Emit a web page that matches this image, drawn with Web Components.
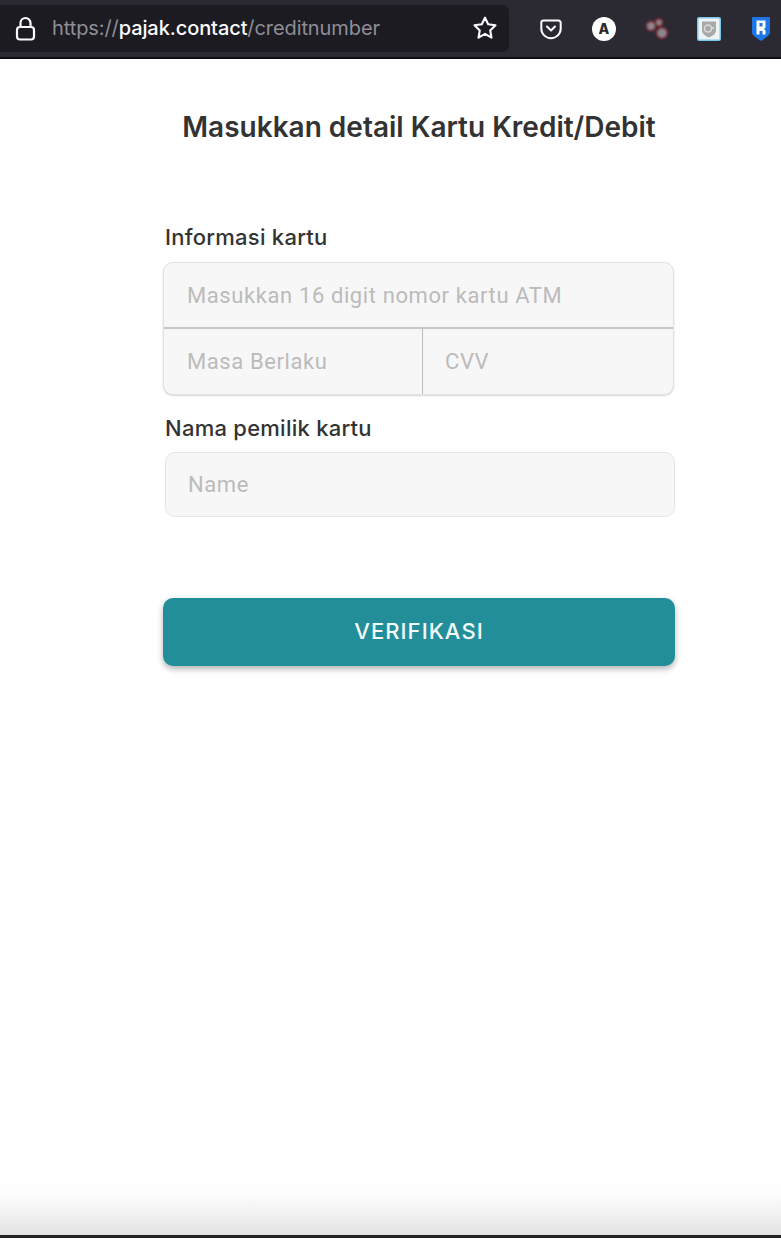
<!DOCTYPE html>
<html lang="id">
<head>
<meta charset="utf-8">
<title>Kartu Kredit/Debit</title>
<style>
html, body { margin: 0; padding: 0; background: #fff; }
body { height: 1238px; overflow: hidden; display: flex; flex-direction: column; font-family: "Inter", "Liberation Sans", sans-serif; }
</style>
</head>
<body>
<browser-bar></browser-bar>
<credit-form>
  <form-title>Masukkan detail Kartu Kredit/Debit</form-title>
  <form-label style="margin-top:76px">Informasi kartu</form-label>
  <card-box style="margin-top:9px"></card-box>
  <form-label style="margin-top:17px">Nama pemilik kartu</form-label>
  <name-box style="margin-top:8px">Name</name-box>
  <verify-button style="margin-top:81px">VERIFIKASI</verify-button>
</credit-form>
<bottom-fade></bottom-fade>

<script>
window.customElements.define('browser-bar',
   class extends HTMLElement {
      constructor(){super(); this.attachShadow({mode:'open'});
	 this.shadowRoot.innerHTML = `
<style>
:host { display:flex; align-items:center; flex:none; height:57px; box-sizing:content-box;
   background:#2b2a33; border-bottom:2px solid #0d0d10; overflow:hidden; }
.url { flex:none; width:509px; height:47px; box-sizing:border-box; margin-top:-1px; padding:0 11px 0 15px;
   display:flex; align-items:center; background:#1c1b22; border-radius:0 6px 6px 0; }
.addr { margin-left:16px; flex:1; font:400 20px "Inter","Liberation Sans",sans-serif; letter-spacing:-.09px; color:#8f8e96; white-space:nowrap; }
.addr b { font-weight:500; color:#fbfbfe; }
.tools { flex:1; display:flex; align-items:center; padding-left:31px; }
svg { display:block; flex:none; }
.avatar { flex:none; width:24px; height:24px; margin-right:28px; border-radius:50%; background:#fff; color:#2b2a33;
   display:flex; align-items:center; justify-content:center; font:800 14px "Inter","Liberation Sans",sans-serif; }
</style>
<div class="url">
   <svg width="21" height="25" viewBox="0 0 21 25" fill="none" stroke="#fbfbfe" stroke-width="2.2">
      <path d="M5.5 11V7a5 5 0 0 1 10 0v4"/>
      <rect x="2" y="11" width="17" height="12.5" rx="3"/>
   </svg>
   <span class="addr">https://<b>pajak.contact</b>/creditnumber</span>
   <svg width="26" height="26" viewBox="0 0 26 26" fill="none" stroke="#fbfbfe" stroke-width="2.1" stroke-linejoin="round">
      <path d="M13 2.6l3.2 6.7 7.3 1-5.3 5.1 1.3 7.3L13 18.8l-6.5 3.9 1.3-7.3-5.3-5.1 7.3-1z"/>
   </svg>
</div>
<div class="tools">
   <svg width="22" height="22" viewBox="0 0 22 22" fill="none" stroke="#fbfbfe" stroke-width="2" style="margin-right:30px">
      <path d="M3.6 2.5h14.8a2.3 2.3 0 0 1 2.3 2.3v5.7a9.7 9.7 0 0 1-19.4 0V4.8a2.3 2.3 0 0 1 2.3-2.3z"/>
      <path d="M7 8.5l4 4 4-4" stroke-linecap="round" stroke-linejoin="round"/>
   </svg>
   <div class="avatar">A</div>
   <svg width="26" height="26" viewBox="0 0 26 26" style="margin-right:27px">
      <defs><filter id="bl" x="-30%" y="-30%" width="160%" height="160%"><feGaussianBlur stdDeviation="1"/></filter></defs>
      <g fill="#8a8a8e" stroke="#7a2c38" stroke-width="2" filter="url(#bl)">
         <circle cx="7" cy="10" r="4.500"/><circle cx="15" cy="6.500" r="3.500"/><circle cx="18" cy="17" r="5.300"/>
      </g>
   </svg>
   <svg width="24" height="24" viewBox="0 0 24 24" style="margin-right:31px">
      <rect width="24" height="24" rx="2" fill="#7cc6e8"/>
      <rect x="1.500" y="1.500" width="21" height="21" fill="#eef3f5"/>
      <path d="M5 4.500h14v8.500c0 4-3.500 6-7 7.500-3.500-1.500-7-3.500-7-7.500z" fill="#a9a9a9"/>
      <circle cx="11" cy="11.500" r="3.500" fill="none" stroke="#dcdcdc" stroke-width="1.500"/>
      <circle cx="16" cy="11" r="1" fill="#dcdcdc"/>
   </svg>
   <svg width="18" height="24" viewBox="0 0 18 24">
      <path d="M1 0h16a1 1 0 0 1 1 1v15c0 2-6 6-9 8-3-2-9-6-9-8V1a1 1 0 0 1 1-1z" fill="#1c76e8"/>
      <path fill="#fff" fill-rule="evenodd" d="M4.500 3.500h9v7l-1.500 1.500 1.500 1.500v4h-3v-3.500h-3v3.500h-3zM7.500 6v3.500h3V6z"/>
   </svg>
</div>`;
      }
   })

window.customElements.define('credit-form',
   class extends HTMLElement {
      constructor(){super(); this.attachShadow({mode:'open'});
	 this.shadowRoot.innerHTML = `
<style>
:host { display:flex; flex-direction:column; flex:1; box-sizing:border-box; padding:50px 106px 0 163px; }
</style>
<slot></slot>`;
      }
   })

window.customElements.define('form-title',
   class extends HTMLElement {
      constructor(){super(); this.attachShadow({mode:'open'});
	 this.shadowRoot.innerHTML = `
<style>
:host { display:block; text-align:center; white-space:nowrap;
   font:600 28px/36px "Inter","Liberation Sans",sans-serif; color:#333; }
</style>
<slot></slot>`;
      }
   })

window.customElements.define('form-label',
   class extends HTMLElement {
      constructor(){super(); this.attachShadow({mode:'open'});
	 this.shadowRoot.innerHTML = `
<style>
:host { display:block; padding-left:2px; font:500 22px/32px "Inter","Liberation Sans",sans-serif; color:#333; letter-spacing:.25px; }
</style>
<slot></slot>`;
      }
   })

window.customElements.define('card-box',
   class extends HTMLElement {
      constructor(){super(); this.attachShadow({mode:'open'});
	 this.shadowRoot.innerHTML = `
<style>
:host { display:block; box-sizing:border-box; height:133px; margin-right:1px; background:#f7f7f7; border:1px solid #e2e2e2; border-radius:10px;
   box-shadow:0 1px 2px #d6d6d6; overflow:hidden; font:400 22px "Roboto","Liberation Sans",sans-serif; color:#bbb; letter-spacing:.6px; }
.num { height:64px; padding-left:23px; display:flex; align-items:center; border-bottom:2px solid #c6c6c6; }
.row { display:flex; height:65px; }
.exp { width:235px; padding-left:23px; display:flex; align-items:center; border-right:1px solid #bdbdbd; }
.cvv { flex:1; padding-left:22px; display:flex; align-items:center; }
</style>
<div class="num">Masukkan 16 digit nomor kartu ATM</div>
<div class="row">
   <div class="exp">Masa Berlaku</div>
   <div class="cvv">CVV</div>
</div>`;
      }
   })

window.customElements.define('name-box',
   class extends HTMLElement {
      constructor(){super(); this.attachShadow({mode:'open'});
	 this.shadowRoot.innerHTML = `
<style>
:host { display:flex; align-items:center; box-sizing:border-box; height:65px; margin-left:2px; padding-left:22px;
   background:#f7f7f7; border:1px solid #e6e6e6; border-radius:10px; font:400 22px "Roboto","Liberation Sans",sans-serif; color:#bbb; letter-spacing:.6px; }
</style>
<slot></slot>`;
      }
   })

window.customElements.define('verify-button',
   class extends HTMLElement {
      constructor(){super(); this.attachShadow({mode:'open'});
	 this.shadowRoot.innerHTML = `
<style>
:host { display:flex; align-items:center; justify-content:center; box-sizing:border-box; height:68px; padding-bottom:2px; background:#228e99; border-radius:10px;
   box-shadow:0 3px 6px rgba(0,0,0,.3); color:#f4fbfb; font:500 22px "Inter","Liberation Sans",sans-serif; letter-spacing:1.05px; cursor:pointer; }
</style>
<slot></slot>`;
      }
      connectedCallback(){
	 this.addEventListener("click", e => {
	    this.dispatchEvent(new CustomEvent("verifikasi", { bubbles:true, composed:true }))
	 })
      }
   })

window.customElements.define('bottom-fade',
   class extends HTMLElement {
      constructor(){super(); this.attachShadow({mode:'open'});
	 this.shadowRoot.innerHTML = `
<style>
:host { display:block; flex:none; height:62px; background:linear-gradient(#fff 0,#fdfdfd 35%,#e3e3e3 100%); border-bottom:3px solid #232323; box-sizing:content-box; }
</style>`;
      }
   })
</script>
</body>
</html>
